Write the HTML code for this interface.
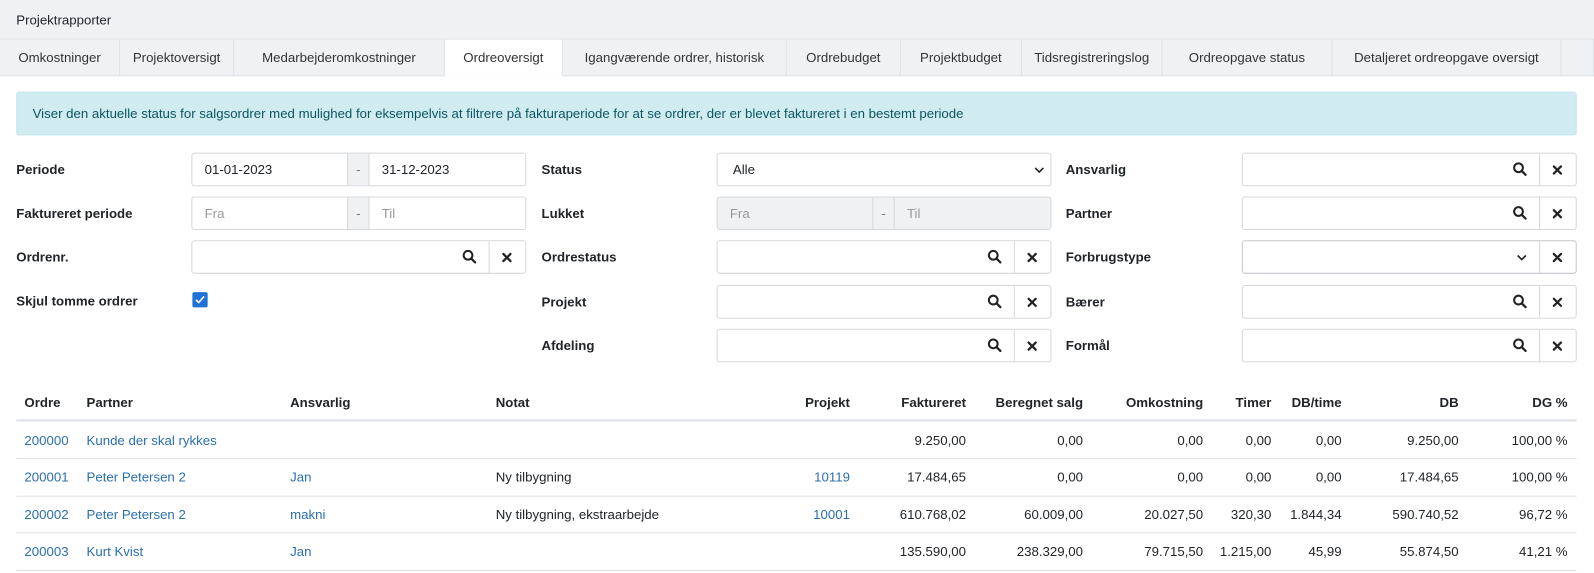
<!DOCTYPE html>
<html><head><meta charset="utf-8"><style>
*{box-sizing:border-box;margin:0;padding:0}
html,body{width:1594px;height:573px;overflow:hidden;background:#fff}
#w{position:absolute;left:0;top:0;width:1566px;height:563px;transform:scale(1.0179);transform-origin:0 0;font-family:"Liberation Sans",sans-serif;font-size:13px;color:#212529}
.a{position:absolute}
.hdr{left:0;top:0;width:1566px;height:39px;background:#f0f1f3;border-bottom:1px solid #dee2e6}
.tabs{left:0;top:39px;width:1566px;height:36px;background:#f0f1f3;border-bottom:1px solid #dee2e6;border-right:1px solid #dee2e6}
.tab{position:absolute;top:0;height:35px;line-height:35px;text-align:center;border-right:1px solid #dee2e6;color:#333}
.tab.act{background:#fff;height:36px}
.alert{left:16px;top:90px;width:1533px;height:43px;background:#d1ecf1;border:1px solid #bee5eb;border-radius:3px;color:#0c5460;line-height:41px;padding-left:15px}
.lbl{font-weight:bold;line-height:33px}
.box{position:absolute;height:33px;border:1px solid #d5d8dc;border-radius:3px;background:#fff;line-height:31px}
.box .t{position:absolute;left:12px;top:0}
.ph{color:#999}
.dash{position:absolute;top:0;width:22px;height:31px;background:#f0f1f3;border-left:1px solid #d5d8dc;border-right:1px solid #d5d8dc;text-align:center;color:#777}
.div{position:absolute;top:0;right:35px;width:1px;height:31px;background:#d5d8dc}
.sr{position:absolute;top:8px;right:48px}
.x{position:absolute;top:10px;right:12px}
.lnk{color:#2a6fb0}
.th{font-weight:bold;top:378px;height:35px;line-height:35px}
.c{height:37px;line-height:37px}
.r{text-align:right}
.hl{left:16px;width:1533px;height:2px;background:#dee2e6}
.rl{left:16px;width:1533px;height:1px;background:#dee2e6}
</style></head><body><div id="w">
<div class="a hdr"><span class="a" style="left:16px;top:12px">Projektrapporter</span></div>
<div class="a tabs">
<div class="tab" style="left:0;width:118px">Omkostninger</div>
<div class="tab" style="left:118px;width:112px">Projektoversigt</div>
<div class="tab" style="left:230px;width:207px">Medarbejderomkostninger</div>
<div class="tab act" style="left:437px;width:116px">Ordreoversigt</div>
<div class="tab" style="left:553px;width:220px">Igangværende ordrer, historisk</div>
<div class="tab" style="left:773px;width:112px">Ordrebudget</div>
<div class="tab" style="left:885px;width:119px">Projektbudget</div>
<div class="tab" style="left:1004px;width:138px">Tidsregistreringslog</div>
<div class="tab" style="left:1142px;width:167px">Ordreopgave status</div>
<div class="tab" style="left:1309px;width:225px">Detaljeret ordreopgave oversigt</div>
</div>
<div class="a alert">Viser den aktuelle status for salgsordrer med mulighed for eksempelvis at filtrere på fakturaperiode for at se ordrer, der er blevet faktureret i en bestemt periode</div>

<svg width="0" height="0" style="position:absolute"><defs>
<symbol id="s" viewBox="0 0 14 14"><circle cx="5.8" cy="5.8" r="4.3" fill="none" stroke="#222" stroke-width="2"/><path d="M9 9l3.8 3.8" stroke="#222" stroke-width="2.2" stroke-linecap="round"/></symbol>
<symbol id="xx" viewBox="0 0 12 12"><path d="M2.5 2.5l7 7M9.5 2.5l-7 7" stroke="#222" stroke-width="2.2" stroke-linecap="round"/></symbol>
<symbol id="cv" viewBox="0 0 10 6"><path d="M1 1l4 4 4-4" fill="none" stroke="#222" stroke-width="1.6"/></symbol>
</defs></svg>

<div class="a lbl" style="left:16px;top:150px">Periode</div>
<div class="box" style="left:188px;top:150px;width:329px"><span class="t">01-01-2023</span><div class="dash" style="left:152px">-</div><span class="t" style="left:186px">31-12-2023</span></div>
<div class="a lbl" style="left:16px;top:193px">Faktureret periode</div>
<div class="box" style="left:188px;top:193px;width:329px"><span class="t ph">Fra</span><div class="dash" style="left:152px">-</div><span class="t ph" style="left:186px">Til</span></div>
<div class="a lbl" style="left:16px;top:236px">Ordrenr.</div>
<div class="box" style="left:188px;top:236px;width:329px"><svg class="sr" width="14" height="14"><use href="#s"/></svg><div class="div"></div><svg class="x" width="12" height="12"><use href="#xx"/></svg></div>
<div class="a lbl" style="left:16px;top:279px">Skjul tomme ordrer</div>
<div class="a" style="left:189px;top:287px;width:15px;height:15px;background:#1e73d8;border-radius:2px"><svg width="15" height="15" viewBox="0 0 15 15"><path d="M3.5 7.5l2.7 2.7 5.3-6" fill="none" stroke="#fff" stroke-width="1.6"/></svg></div>

<div class="a lbl" style="left:532px;top:150px">Status</div>
<div class="box" style="left:704px;top:150px;width:329px"><span class="t" style="left:15px">Alle</span><svg class="a" style="right:6px;top:13px" width="10" height="6"><use href="#cv"/></svg></div>
<div class="a lbl" style="left:532px;top:193px">Lukket</div>
<div class="box" style="left:704px;top:193px;width:329px;background:#f0f1f3"><span class="t ph">Fra</span><div class="dash" style="left:152px">-</div><span class="t ph" style="left:186px">Til</span></div>
<div class="a lbl" style="left:532px;top:236px">Ordrestatus</div>
<div class="box" style="left:704px;top:236px;width:329px"><svg class="sr" width="14" height="14"><use href="#s"/></svg><div class="div"></div><svg class="x" width="12" height="12"><use href="#xx"/></svg></div>
<div class="a lbl" style="left:532px;top:280px">Projekt</div>
<div class="box" style="left:704px;top:280px;width:329px"><svg class="sr" width="14" height="14"><use href="#s"/></svg><div class="div"></div><svg class="x" width="12" height="12"><use href="#xx"/></svg></div>
<div class="a lbl" style="left:532px;top:323px">Afdeling</div>
<div class="box" style="left:704px;top:323px;width:329px"><svg class="sr" width="14" height="14"><use href="#s"/></svg><div class="div"></div><svg class="x" width="12" height="12"><use href="#xx"/></svg></div>

<div class="a lbl" style="left:1047px;top:150px">Ansvarlig</div>
<div class="box" style="left:1220px;top:150px;width:329px"><svg class="sr" width="14" height="14"><use href="#s"/></svg><div class="div"></div><svg class="x" width="12" height="12"><use href="#xx"/></svg></div>
<div class="a lbl" style="left:1047px;top:193px">Partner</div>
<div class="box" style="left:1220px;top:193px;width:329px"><svg class="sr" width="14" height="14"><use href="#s"/></svg><div class="div"></div><svg class="x" width="12" height="12"><use href="#xx"/></svg></div>
<div class="a lbl" style="left:1047px;top:236px">Forbrugstype</div>
<div class="box" style="left:1220px;top:236px;width:329px;border-color:#c4c7cb"><svg class="a" style="right:48px;top:13px" width="10" height="6"><use href="#cv"/></svg><div class="div"></div><svg class="x" width="12" height="12"><use href="#xx"/></svg></div>
<div class="a lbl" style="left:1047px;top:280px">Bærer</div>
<div class="box" style="left:1220px;top:280px;width:329px"><svg class="sr" width="14" height="14"><use href="#s"/></svg><div class="div"></div><svg class="x" width="12" height="12"><use href="#xx"/></svg></div>
<div class="a lbl" style="left:1047px;top:323px">Formål</div>
<div class="box" style="left:1220px;top:323px;width:329px"><svg class="sr" width="14" height="14"><use href="#s"/></svg><div class="div"></div><svg class="x" width="12" height="12"><use href="#xx"/></svg></div>

<div class="a th" style="left:24px">Ordre</div>
<div class="a th" style="left:85px">Partner</div>
<div class="a th" style="left:285px">Ansvarlig</div>
<div class="a th" style="left:487px">Notat</div>
<div class="a th r" style="right:731px">Projekt</div>
<div class="a th r" style="right:617px">Faktureret</div>
<div class="a th r" style="right:502px">Beregnet salg</div>
<div class="a th r" style="right:384px">Omkostning</div>
<div class="a th r" style="right:317px">Timer</div>
<div class="a th r" style="right:248px">DB/time</div>
<div class="a th r" style="right:133px">DB</div>
<div class="a th r" style="right:26px">DG %</div>
<div class="a hl" style="top:412px"></div>

<div class="a c lnk" style="left:24px;top:414px">200000</div>
<div class="a c lnk" style="left:85px;top:414px">Kunde der skal rykkes</div>
<div class="a c r" style="right:617px;top:414px">9.250,00</div>
<div class="a c r" style="right:502px;top:414px">0,00</div>
<div class="a c r" style="right:384px;top:414px">0,00</div>
<div class="a c r" style="right:317px;top:414px">0,00</div>
<div class="a c r" style="right:248px;top:414px">0,00</div>
<div class="a c r" style="right:133px;top:414px">9.250,00</div>
<div class="a c r" style="right:26px;top:414px">100,00 %</div>
<div class="a rl" style="top:450px"></div>

<div class="a c lnk" style="left:24px;top:450px">200001</div>
<div class="a c lnk" style="left:85px;top:450px">Peter Petersen 2</div>
<div class="a c lnk" style="left:285px;top:450px">Jan</div>
<div class="a c" style="left:487px;top:450px">Ny tilbygning</div>
<div class="a c r lnk" style="right:731px;top:450px">10119</div>
<div class="a c r" style="right:617px;top:450px">17.484,65</div>
<div class="a c r" style="right:502px;top:450px">0,00</div>
<div class="a c r" style="right:384px;top:450px">0,00</div>
<div class="a c r" style="right:317px;top:450px">0,00</div>
<div class="a c r" style="right:248px;top:450px">0,00</div>
<div class="a c r" style="right:133px;top:450px">17.484,65</div>
<div class="a c r" style="right:26px;top:450px">100,00 %</div>
<div class="a rl" style="top:487px"></div>

<div class="a c lnk" style="left:24px;top:487px">200002</div>
<div class="a c lnk" style="left:85px;top:487px">Peter Petersen 2</div>
<div class="a c lnk" style="left:285px;top:487px">makni</div>
<div class="a c" style="left:487px;top:487px">Ny tilbygning, ekstraarbejde</div>
<div class="a c r lnk" style="right:731px;top:487px">10001</div>
<div class="a c r" style="right:617px;top:487px">610.768,02</div>
<div class="a c r" style="right:502px;top:487px">60.009,00</div>
<div class="a c r" style="right:384px;top:487px">20.027,50</div>
<div class="a c r" style="right:317px;top:487px">320,30</div>
<div class="a c r" style="right:248px;top:487px">1.844,34</div>
<div class="a c r" style="right:133px;top:487px">590.740,52</div>
<div class="a c r" style="right:26px;top:487px">96,72 %</div>
<div class="a rl" style="top:523px"></div>

<div class="a c lnk" style="left:24px;top:523px">200003</div>
<div class="a c lnk" style="left:85px;top:523px">Kurt Kvist</div>
<div class="a c lnk" style="left:285px;top:523px">Jan</div>
<div class="a c r" style="right:617px;top:523px">135.590,00</div>
<div class="a c r" style="right:502px;top:523px">238.329,00</div>
<div class="a c r" style="right:384px;top:523px">79.715,50</div>
<div class="a c r" style="right:317px;top:523px">1.215,00</div>
<div class="a c r" style="right:248px;top:523px">45,99</div>
<div class="a c r" style="right:133px;top:523px">55.874,50</div>
<div class="a c r" style="right:26px;top:523px">41,21 %</div>
<div class="a rl" style="top:560px"></div>
</div></body></html>
